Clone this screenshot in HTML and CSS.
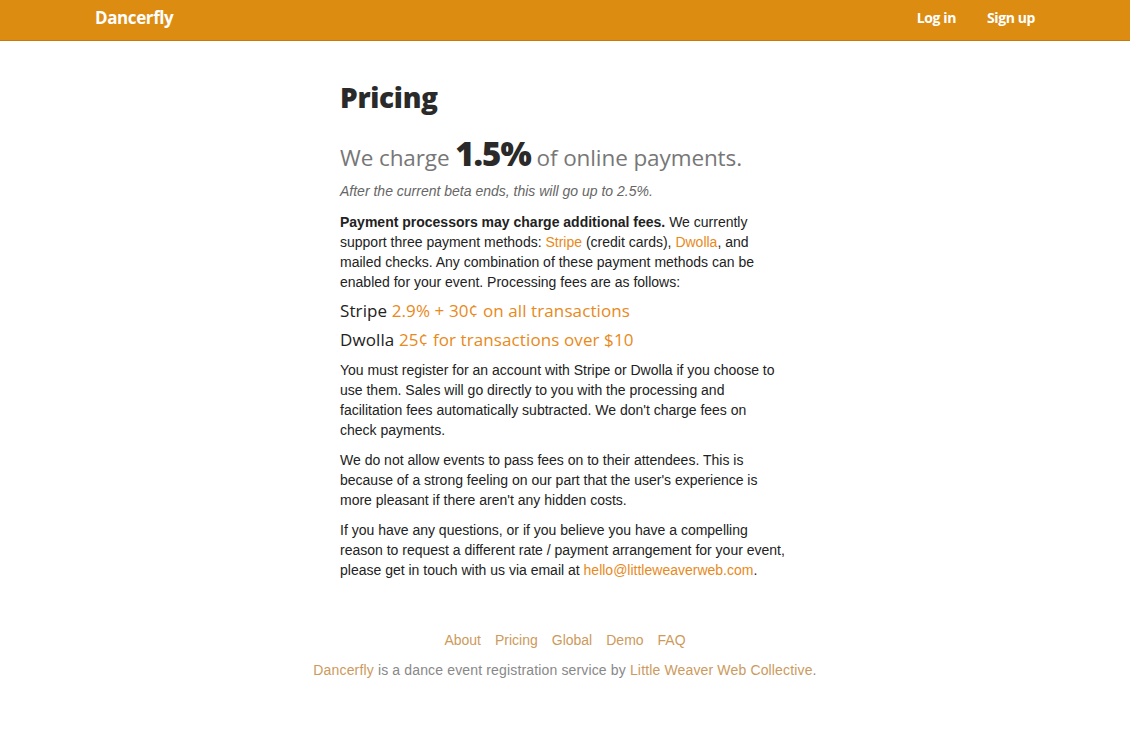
FILE: index.html
```html
<!DOCTYPE html>
<html>
<head>
<meta charset="utf-8">
<title>Pricing - Dancerfly</title>
<link rel="stylesheet" href="styles.css">
</head>
<body>
<header class="topbar">
  <div class="container topbar-inner">
    <a class="brand" href="#">Dancerfly</a>
    <nav class="topnav">
      <a href="#">Log in</a>
      <a href="#">Sign up</a>
    </nav>
  </div>
</header>
<main class="content">
  <h1 class="title">Pricing</h1>
  <p class="lead">We charge <strong>1.5%</strong> of online payments.</p>
  <p class="note">After the current beta ends, this will go up to 2.5%.</p>
  <p><b>Payment processors may charge additional fees.</b> We currently support three payment methods: <a href="#">Stripe</a> (credit cards), <a href="#">Dwolla</a>, and mailed checks. Any combination of these payment methods can be enabled for your event. Processing fees are as follows:</p>
  <dl class="fees">
    <div class="fee"><dt>Stripe</dt> <dd>2.9% + 30¢ on all transactions</dd></div>
    <div class="fee"><dt>Dwolla</dt> <dd>25¢ for transactions over $10</dd></div>
  </dl>
  <p>You must register for an account with Stripe or Dwolla if you choose to use them. Sales will go directly to you with the processing and facilitation fees automatically subtracted. We don't charge fees on check payments.</p>
  <p>We do not allow events to pass fees on to their attendees. This is because of a strong feeling on our part that the user's experience is more pleasant if there aren't any hidden costs.</p>
  <p>If you have any questions, or if you believe you have a compelling reason to request a different rate / payment arrangement for your event, please get in touch with us via email at <a href="#">hello@littleweaverweb.com</a>.</p>
</main>
<footer class="footer">
  <nav class="footer-links">
    <a href="#">About</a>
    <a href="#">Pricing</a>
    <a href="#">Global</a>
    <a href="#">Demo</a>
    <a href="#">FAQ</a>
  </nav>
  <p class="credit"><a href="#">Dancerfly</a> is a dance event registration service by <a href="#">Little Weaver Web Collective</a>.</p>
</footer>
</body>
</html>
```

FILE: styles.css
```css
html, body {
  margin: 0;
  padding: 0;
  background: #fff;
}
body {
  font-family: "Liberation Sans", Arial, sans-serif;
  font-size: 14px;
  line-height: 20px;
  color: #222;
}
a {
  color: #e8891a;
  text-decoration: none;
}
.topbar {
  background: #dd8c12;
  border-bottom: 1px solid #c47a0c;
  height: 40px;
}
.container {
  width: 940px;
  margin: 0 auto;
}
.topbar-inner {
  display: flex;
  justify-content: space-between;
  align-items: center;
  height: 36px;
}
.brand {
  font-family: "Open Sans", "Noto Sans", sans-serif;
  font-weight: 700;
  font-size: 17px;
  color: #fff;
  letter-spacing: -0.4px;
}
.topnav {
  display: flex;
  gap: 31px;
}
.topnav a {
  font-family: "Open Sans", "Noto Sans", sans-serif;
  font-weight: 700;
  font-size: 14px;
  color: #fff;
  letter-spacing: -0.4px;
}
.content {
  width: 446px;
  margin: 0 0 0 340px;
  padding-top: 36px;
}
.title {
  font-family: "Open Sans", "Noto Sans", sans-serif;
  font-weight: 800;
  font-size: 28px;
  line-height: 40px;
  margin: 0 0 19px;
  color: #2a2a2a;
  letter-spacing: -0.3px;
}
.lead {
  font-family: "Open Sans", "Noto Sans", sans-serif;
  font-size: 22.5px;
  line-height: 36px;
  color: #777;
  margin: 0 0 5px;
  letter-spacing: -0.1px;
  white-space: nowrap;
}
.lead strong {
  font-size: 33px;
  font-weight: 800;
  color: #2a2a2a;
  letter-spacing: -1px;
}
.note {
  font-style: italic;
  color: #666;
  margin: 0 0 11px;
}
p {
  margin: 0 0 10px;
}
.fees {
  margin: -3px 0 8px;
}
.fee {
  font-family: "Open Sans", "Noto Sans", sans-serif;
  font-size: 17px;
  line-height: 24px;
  margin-bottom: 5px;
  letter-spacing: 0.1px;
}
.fee dt, .fee dd {
  display: inline;
  margin: 0;
}
.fee dt {
  color: #222;
}
.fee dd {
  color: #e8891a;
}
.footer {
  margin-top: 50px;
  text-align: center;
  color: #888;
}
.footer a {
  color: #cc9a5c;
}
.footer-links {
  display: flex;
  justify-content: center;
  gap: 14px;
  margin-bottom: 10px;
}
.credit {
  margin: 0;
  letter-spacing: 0.15px;
}
```
